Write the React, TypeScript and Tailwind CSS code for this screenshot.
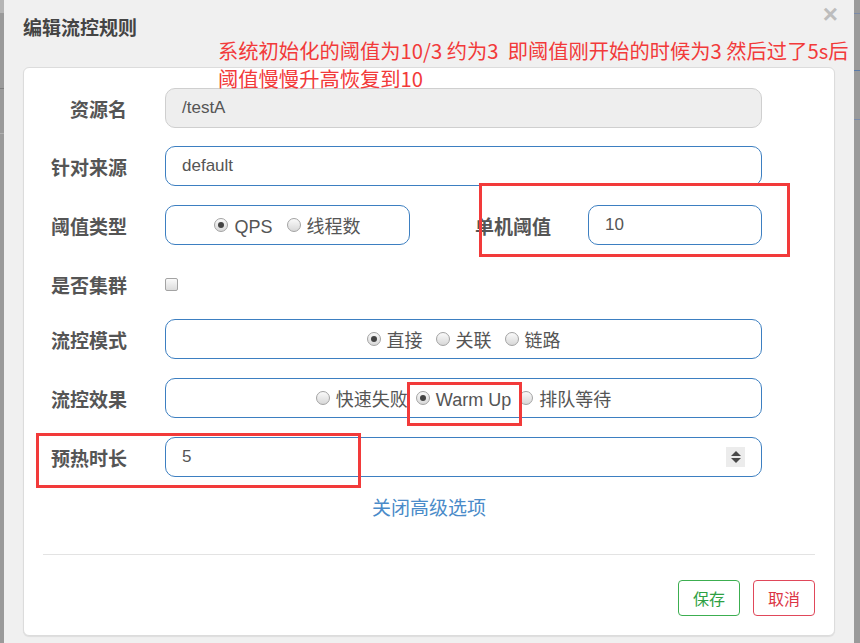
import React from 'react'

const sans = "font-['Liberation_Sans','Noto_Sans_CJK_SC',sans-serif]"
const cjk = "font-['Noto_Sans_CJK_SC','Liberation_Sans',sans-serif]"

function Radio({ checked, label }: { checked?: boolean; label: string }) {
  return (
    <span className="flex items-center gap-[6px]">
      <span className="relative flex h-[14px] w-[14px] items-center justify-center rounded-full border border-[#a3a3a3] bg-gradient-to-b from-[#fafafa] to-[#d8d8d8]">
        {checked && <span className="h-[6px] w-[6px] rounded-full bg-[#444]" />}
      </span>
      <span className="pt-[4px] text-[18px] leading-[22px] text-[#555]">{label}</span>
    </span>
  )
}

function Label({ children, className = 'w-[103px]' }: { children: React.ReactNode; className?: string }) {
  return (
    <div className={`${className} shrink-0 pt-[2px] text-right text-[19px] font-bold text-[#555] ${cjk}`}>
      {children}
    </div>
  )
}

const boxCls = 'h-[40px] rounded-[10px] border border-[#3d7fc1] bg-white'

export default function App() {
  return (
    <div className={`relative flex h-[643px] w-[860px] overflow-hidden ${sans}`}>
      {/* backdrop strips */}
      <div className="flex w-[4px] flex-col bg-[#9a9a9a]">
        <div className="h-[13px] bg-[#b5b5b5]" />
        <div className="mt-[75px] h-px bg-[#7d7d7d]" />
        <div className="mt-[44px] h-px bg-[#b0b0b0]" />
      </div>

      <div className="flex flex-1 flex-col bg-[#f0f0f0] px-[19px]">
        <div className="relative h-[67px]">
          <div className={`pt-[14px] text-[19px] font-bold leading-[26px] text-[#444] ${cjk}`}>编辑流控规则</div>
          <div className="absolute right-[-3px] top-[1px] text-[26px] font-bold leading-[26px] text-[#bdbdbd]">×</div>
        </div>

        <div className="flex flex-col rounded-[6px] border border-[#dcdcdc] bg-white pt-[20px] pb-[19px] shadow-[0_1px_1px_rgba(0,0,0,0.08)]">
          {/* 资源名 */}
          <div className="flex items-center gap-[38px]">
            <Label>资源名</Label>
            <div className="flex h-[40px] w-[597px] items-center rounded-[10px] border border-[#cfcfcf] bg-[#eeeeee] px-[16px] text-[17px] text-[#555]">
              /testA
            </div>
          </div>

          {/* 针对来源 */}
          <div className="mt-[18px] flex items-center gap-[38px]">
            <Label>针对来源</Label>
            <div className={`${boxCls} flex w-[597px] items-center px-[16px] text-[17px] text-[#555]`}>default</div>
          </div>

          {/* 阈值类型 / 单机阈值 */}
          <div className="mt-[19px] flex items-center gap-[38px]">
            <Label>阈值类型</Label>
            <div className="flex w-[597px] items-center">
              <div className={`${boxCls} flex w-[245px] items-center justify-center gap-[14px]`}>
                <Radio checked label="QPS" />
                <Radio label="线程数" />
              </div>
              <Label className="w-[141px]">单机阈值</Label>
              <div className={`${boxCls} ml-[37px] flex w-[174px] items-center px-[16px] text-[17px] text-[#555]`}>10</div>
            </div>
          </div>

          {/* 是否集群 */}
          <div className="mt-[19px] flex h-[40px] items-center gap-[38px]">
            <Label>是否集群</Label>
            <span className="h-[13px] w-[13px] rounded-[2px] border border-[#a3a3a3] bg-gradient-to-b from-[#fafafa] to-[#dcdcdc]" />
          </div>

          {/* 流控模式 */}
          <div className="mt-[15px] flex items-center gap-[38px]">
            <Label>流控模式</Label>
            <div className={`${boxCls} flex w-[597px] items-center justify-center gap-[13px]`}>
              <Radio checked label="直接" />
              <Radio label="关联" />
              <Radio label="链路" />
            </div>
          </div>

          {/* 流控效果 */}
          <div className="mt-[19px] flex items-center gap-[38px]">
            <Label>流控效果</Label>
            <div className={`${boxCls} flex w-[597px] items-center justify-center gap-[8px]`}>
              <Radio label="快速失败" />
              <Radio checked label="Warm Up" />
              <Radio label="排队等待" />
            </div>
          </div>

          {/* 预热时长 */}
          <div className="mt-[19px] flex items-center gap-[38px]">
            <Label>预热时长</Label>
            <div className={`${boxCls} flex w-[597px] items-center justify-between pl-[16px] pr-[16px] text-[17px] text-[#555]`}>
              <span>5</span>
              <span className="flex h-[20px] w-[19px] flex-col items-center justify-center gap-[2px] bg-[#ececec]">
                <span className="h-0 w-0 border-x-[5px] border-b-[5px] border-x-transparent border-b-[#4a4a4a]" />
                <span className="h-0 w-0 border-x-[5px] border-t-[5px] border-x-transparent border-t-[#4a4a4a]" />
              </span>
            </div>
          </div>

          <div className={`mt-[18px] text-center text-[19px] leading-[24px] text-[#4a8bc9] ${cjk}`}>关闭高级选项</div>

          <div className="mx-[19px] mt-[35px] h-px bg-[#e3e3e3]" />

          <div className={`mx-[19px] mt-[25px] flex justify-end gap-[13px] ${cjk}`}>
            <button className="h-[36px] w-[62px] rounded-[4px] border border-[#3cae50] text-[16px] text-[#2ea043]">保存</button>
            <button className="h-[36px] w-[62px] rounded-[4px] border border-[#e0485a] text-[16px] text-[#dc3545]">取消</button>
          </div>
        </div>
      </div>

      <div className="flex w-[6px] flex-col bg-[#9a9a9a]">
        <div className="mt-[13px] h-px bg-[#7a8aa8]" />
        <div className="mt-[56px] h-px bg-[#5a7aa8]" />
        <div className="mt-[48px] h-px bg-[#7a8aa8]" />
      </div>

      {/* annotations */}
      <div className={`absolute left-[218px] top-[36px] text-[20.3px] leading-[28px] text-[#f23a3a] ${cjk} whitespace-pre`}>
        {'系统初始化的阈值为10/3 约为3  即阈值刚开始的时候为3 然后过了5s后\n阈值慢慢升高恢复到10'}
      </div>
      <div className="absolute left-[479px] top-[183px] h-[74px] w-[311px] border-[3px] border-[#f23a3a]" />
      <div className="absolute left-[407px] top-[382px] h-[44px] w-[115px] border-[3px] border-[#f23a3a]" />
      <div className="absolute left-[36px] top-[433px] h-[55px] w-[325px] border-[3px] border-[#f23a3a]" />
    </div>
  )
}
